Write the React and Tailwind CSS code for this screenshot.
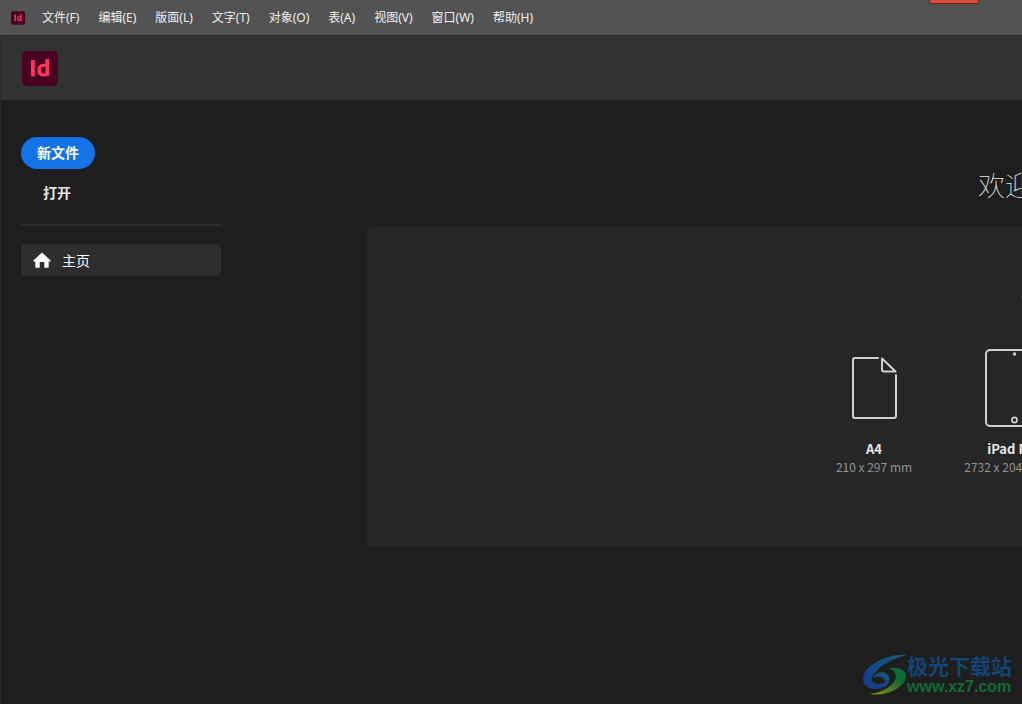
const menus = [
  '文件(F)', '编辑(E)', '版面(L)', '文字(T)', '对象(O)', '表(A)', '视图(V)', '窗口(W)', '帮助(H)',
];

function AppLogo({ className }) {
  return (
    <svg className={className} viewBox="0 0 36 35" role="img" aria-label="InDesign">
      <rect width="36" height="35" rx="5" fill="#49021f" />
      <rect x="9" y="9" width="3.8" height="16.4" fill="#ff3366" />
      <path
        d="M23.400 8v5.100a6 6 0 0 0-1.800-.3c-3.700 0-6.200 2.700-6.200 6.500 0 3.800 2.300 6.200 6.100 6.200 2 0 3.900-.4 5.500-1.100V8h-3.600Zm0 14.200c-.5.200-1 .3-1.600.3-1.800 0-2.800-1.200-2.800-3.300 0-2.200 1.100-3.500 2.900-3.500.6 0 1.100.1 1.500.3v6.200Z"
        fill="#ff3366"
      />
    </svg>
  );
}

function HomeIcon() {
  return (
    <svg className="h-4 w-[18px]" viewBox="0 0 18 16" fill="#fff" aria-hidden="true">
      <path d="M9 .5.400 8.400c-.4.400-.1 1 .4 1H2.300v5.600c0 .4.300.7.700.7h3.700v-5.200c0-.3.200-.5.500-.5h3.600c.3 0 .5.200.5.500v5.200H15c.4 0 .700-.3.700-.7V9.400h1.500c.5 0 .8-.6.400-1L9 .5Z" />
    </svg>
  );
}

function PageIcon() {
  return (
    <svg className="h-16 w-12" viewBox="0 0 48 64" fill="none" stroke="#d0d0d0" strokeWidth="2" strokeLinecap="round" strokeLinejoin="round" aria-hidden="true">
      <path d="M28 2H5a2 2 0 0 0-2 2v56a2 2 0 0 0 2 2h39a2 2 0 0 0 2-2V19" />
      <path d="M32 2.500v11a2 2 0 0 0 2 2h11.500Z" />
    </svg>
  );
}

function TabletIcon() {
  return (
    <svg className="h-20 w-15" viewBox="0 0 60 80" fill="none" stroke="#d0d0d0" strokeWidth="2" aria-hidden="true">
      <rect x="2" y="2" width="56" height="76" rx="4" />
      <circle cx="30.500" cy="6" r="1.700" fill="#d0d0d0" stroke="none" />
      <circle cx="30.500" cy="72" r="2.600" strokeWidth="1.600" />
    </svg>
  );
}

function Preset({ icon, name, size }) {
  return (
    <button type="button" className="flex w-[140px] shrink-0 flex-col items-center">
      <span className="flex h-20 items-center">{icon}</span>
      <span className="mt-[11px] text-[13px] leading-5 font-bold text-[#e8e8e8]">{name}</span>
      <span className="text-xs leading-4 whitespace-nowrap text-[#929292]">{size}</span>
    </button>
  );
}

function Watermark() {
  return (
    <div className="absolute right-2.5 bottom-1.5 flex items-start">
      <svg className="h-[42px] w-11" viewBox="0 0 44 42" aria-hidden="true">
        <defs>
          <linearGradient id="blue" x1="0" y1="1" x2="1" y2="0">
            <stop offset="0" stopColor="#16388c" />
            <stop offset="1" stopColor="#12607c" />
          </linearGradient>
          <linearGradient id="green" x1="0" y1="1" x2="1" y2="0">
            <stop offset="0" stopColor="#8a8c12" />
            <stop offset="0.7" stopColor="#0d6b35" />
          </linearGradient>
        </defs>
        <path d="M44 1C26-1 0 11 0 25c0 6 5 10 12 10 7 0 12-3 12-8-4 4-13 4-15 0C7 20 22 6 44 1Z" fill="url(#blue)" />
        <path d="M11 24c1-7 13-8 15-1 1 4-1 8-5 10 2-4 2-7-1-9-3-2-6-1-9 0Z" fill="url(#blue)" />
        <path d="M26 14c11-1 17 2 17 8 0 11-19 21-37 18 12-1 26-8 27-17 0-4-2-7-7-9Z" fill="url(#green)" />
      </svg>
      <div className="flex flex-col">
        <span className="text-[21px] leading-[22px] font-bold text-[#134474]">极光下载站</span>
        <span className="font-['Liberation_Sans',sans-serif] text-base leading-[22px] font-bold text-[#116a31]">www.xz7.com</span>
      </div>
    </div>
  );
}

export default function App() {
  return (
    <div className="relative flex min-h-screen flex-col overflow-hidden bg-[#1e1e1e] font-['Noto_Sans_CJK_SC',sans-serif] text-white">
      <div className="relative flex h-9 items-center border-b border-[#282828] bg-[#535353] pl-[11px]">
        <AppLogo className="h-3.5 w-3.5" />
        <nav className="ml-[17px] flex gap-[19px] font-['Noto_Sans','Noto_Sans_CJK_SC',sans-serif]">
          {menus.map((m) => (
            <button key={m} type="button" className="text-xs leading-4 whitespace-nowrap text-[#f0f0f0]">{m}</button>
          ))}
        </nav>
        <button type="button" aria-label="关闭" className="absolute top-0 right-[43px] h-1 w-[50px] border border-t-0 border-[#6d1f18] bg-[#d9503f]" />
      </div>
      <div className="flex flex-1 flex-col border-l border-[#2a2a2a]">
        <header className="flex h-16 items-center bg-[#323232] pt-px pl-[21px]">
          <AppLogo className="h-[35px] w-9" />
        </header>
        <div className="flex flex-1">
          <aside className="flex w-[220px] shrink-0 flex-col items-start pt-[37px] pl-5">
            <button type="button" className="h-8 rounded-full bg-[#1473e6] px-4 pb-0.5 text-sm font-bold">新文件</button>
            <button type="button" className="mt-2 h-8 px-[22px] pb-0.5 text-sm font-bold text-[#e3e3e3]">打开</button>
            <hr className="mt-[15px] w-full border-t-2 border-[#2d2d2d]" />
            <a href="#home" className="mt-[18px] flex h-8 w-full items-center gap-[11px] rounded bg-[#2e2e2e] px-3 text-sm">
              <HomeIcon />
              主页
            </a>
          </aside>
          <main className="relative min-w-0 flex-1 overflow-hidden pt-[67px] pl-[146px]">
            <h1 className="ml-[611px] h-[60px] text-[27px] leading-9 font-thin whitespace-nowrap text-[#e8e8e8]">欢迎</h1>
            <section className="rounded-l bg-[#262626] pt-14 pb-[60px]">
              <h2 className="ml-[654px] h-[65px] text-lg leading-7 font-light whitespace-nowrap text-[#d0d0d0]">快速开始新文件</h2>
              <div className="flex h-[139px] pl-[437px]">
                <Preset icon={<PageIcon />} name="A4" size="210 x 297 mm" />
                <Preset icon={<TabletIcon />} name="iPad Pro" size="2732 x 2048 pixels" />
              </div>
            </section>
          </main>
        </div>
      </div>
      <Watermark />
    </div>
  );
}
